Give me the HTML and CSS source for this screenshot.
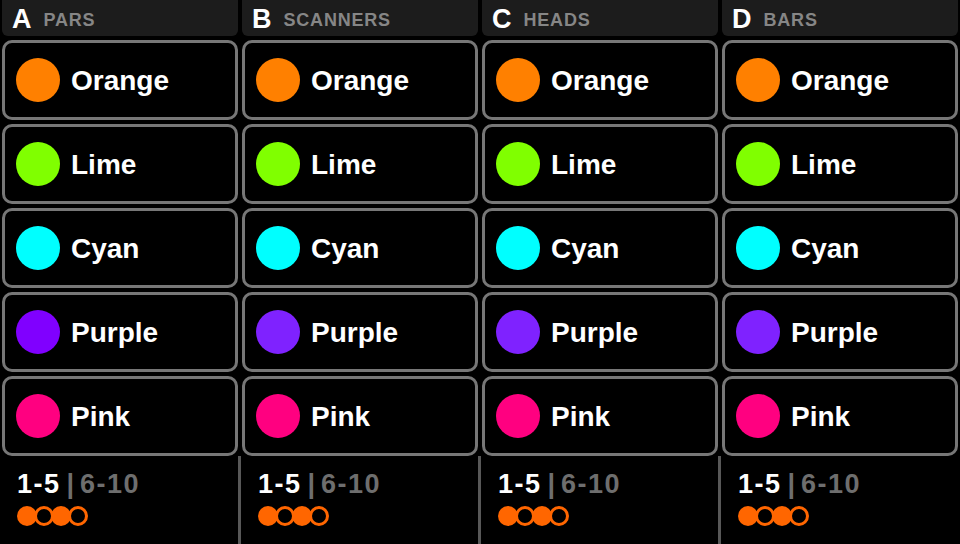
FILE: index.html
```html
<!DOCTYPE html>
<html lang="en">
<head>
<meta charset="utf-8">
<title>Fixture Colours</title>
<link rel="stylesheet" href="styles.css">
</head>
<body>
<main class="board">
  <section class="col col-a">
    <header class="head"><span class="letter">A</span><span class="label">PARS</span></header>
    <div class="cards">
      <div class="card"><span class="swatch orange"></span><span class="name">Orange</span></div>
      <div class="card"><span class="swatch lime"></span><span class="name">Lime</span></div>
      <div class="card"><span class="swatch cyan"></span><span class="name">Cyan</span></div>
      <div class="card"><span class="swatch purple"></span><span class="name">Purple</span></div>
      <div class="card"><span class="swatch pink"></span><span class="name">Pink</span></div>
    </div>
    <footer class="foot">
      <div class="range"><span class="on">1-5</span><span class="sep">|</span><span class="off">6-10</span></div>
      <div class="dots"><span class="dot fill"></span><span class="dot ring"></span><span class="dot fill"></span><span class="dot ring"></span></div>
    </footer>
  </section>
  <section class="col col-b">
    <header class="head"><span class="letter">B</span><span class="label">SCANNERS</span></header>
    <div class="cards">
      <div class="card"><span class="swatch orange"></span><span class="name">Orange</span></div>
      <div class="card"><span class="swatch lime"></span><span class="name">Lime</span></div>
      <div class="card"><span class="swatch cyan"></span><span class="name">Cyan</span></div>
      <div class="card"><span class="swatch purple alt"></span><span class="name">Purple</span></div>
      <div class="card"><span class="swatch pink"></span><span class="name">Pink</span></div>
    </div>
    <footer class="foot">
      <div class="range"><span class="on">1-5</span><span class="sep">|</span><span class="off">6-10</span></div>
      <div class="dots"><span class="dot fill"></span><span class="dot ring"></span><span class="dot fill"></span><span class="dot ring"></span></div>
    </footer>
  </section>
  <section class="col col-c">
    <header class="head"><span class="letter">C</span><span class="label">HEADS</span></header>
    <div class="cards">
      <div class="card"><span class="swatch orange"></span><span class="name">Orange</span></div>
      <div class="card"><span class="swatch lime"></span><span class="name">Lime</span></div>
      <div class="card"><span class="swatch cyan"></span><span class="name">Cyan</span></div>
      <div class="card"><span class="swatch purple alt"></span><span class="name">Purple</span></div>
      <div class="card"><span class="swatch pink"></span><span class="name">Pink</span></div>
    </div>
    <footer class="foot">
      <div class="range"><span class="on">1-5</span><span class="sep">|</span><span class="off">6-10</span></div>
      <div class="dots"><span class="dot fill"></span><span class="dot ring"></span><span class="dot fill"></span><span class="dot ring"></span></div>
    </footer>
  </section>
  <section class="col col-d">
    <header class="head"><span class="letter">D</span><span class="label">BARS</span></header>
    <div class="cards">
      <div class="card"><span class="swatch orange"></span><span class="name">Orange</span></div>
      <div class="card"><span class="swatch lime"></span><span class="name">Lime</span></div>
      <div class="card"><span class="swatch cyan"></span><span class="name">Cyan</span></div>
      <div class="card"><span class="swatch purple alt"></span><span class="name">Purple</span></div>
      <div class="card"><span class="swatch pink"></span><span class="name">Pink</span></div>
    </div>
    <footer class="foot">
      <div class="range"><span class="on">1-5</span><span class="sep">|</span><span class="off">6-10</span></div>
      <div class="dots"><span class="dot fill"></span><span class="dot ring"></span><span class="dot fill"></span><span class="dot ring"></span></div>
    </footer>
  </section>
</main>
</body>
</html>
```

FILE: styles.css
```css
* { box-sizing: border-box; }

html, body {
  margin: 0;
  padding: 0;
  background: #000;
  width: 960px;
  height: 544px;
  overflow: hidden;
}

body {
  font-family: "Liberation Sans", Arial, Helvetica, sans-serif;
  font-weight: bold;
  color: #fff;
}

.board {
  display: grid;
  grid-template-columns: repeat(4, 240px);
  height: 544px;
}

.col {
  display: flex;
  flex-direction: column;
  min-width: 0;
}

.head {
  height: 36px;
  margin: 0 2px 4px;
  padding: 3px 0 0 10px;
  background: #1c1c1c;
  border-radius: 0 0 6px 6px;
  display: flex;
  align-items: center;
  line-height: 1;
}

.letter {
  font-size: 27px;
  color: #fff;
}

.label {
  font-size: 18px;
  letter-spacing: 0.8px;
  color: #868686;
  margin-left: 12px;
}

.cards {
  display: flex;
  flex-direction: column;
  gap: 4px;
  margin: 0 2px;
}

.card {
  height: 80px;
  border: 3px solid #777;
  border-radius: 10px;
  background: #000;
  display: flex;
  align-items: center;
  padding: 1px 0 0 11px;
}

.swatch {
  width: 44px;
  height: 44px;
  border-radius: 50%;
  flex: none;
  margin-top: -1px;
}

.orange { background: #ff8000; }
.lime { background: #80ff00; }
.cyan { background: #00ffff; }
.purple { background: #8000ff; }
.purple.alt { background: #7f22ff; }
.pink { background: #ff0080; }

.name {
  font-size: 28px;
  line-height: 1;
  margin-left: 11px;
  color: #fff;
}

.foot {
  flex: 1;
  padding: 15px 0 0 17px;
}

.col-b .foot,
.col-c .foot,
.col-d .foot {
  margin-left: -2px;
  border-left: 3px solid #585858;
}

.range {
  display: flex;
  align-items: center;
  font-size: 27px;
  line-height: 1;
  letter-spacing: 1.5px;
  white-space: nowrap;
}

.on { color: #fff; }
.sep { color: #6e6e6e; letter-spacing: 0; margin: 0 6px 0 6px; }
.off { color: #6e6e6e; }

.dots {
  display: flex;
  margin-top: 8px;
}

.dot {
  width: 20px;
  height: 20px;
  border-radius: 50%;
  flex: none;
}

.dot + .dot { margin-left: -3px; }

.dot.fill { background: #ff6600; }
.dot.ring { border: 3px solid #ff6600; background: #000; }
```
